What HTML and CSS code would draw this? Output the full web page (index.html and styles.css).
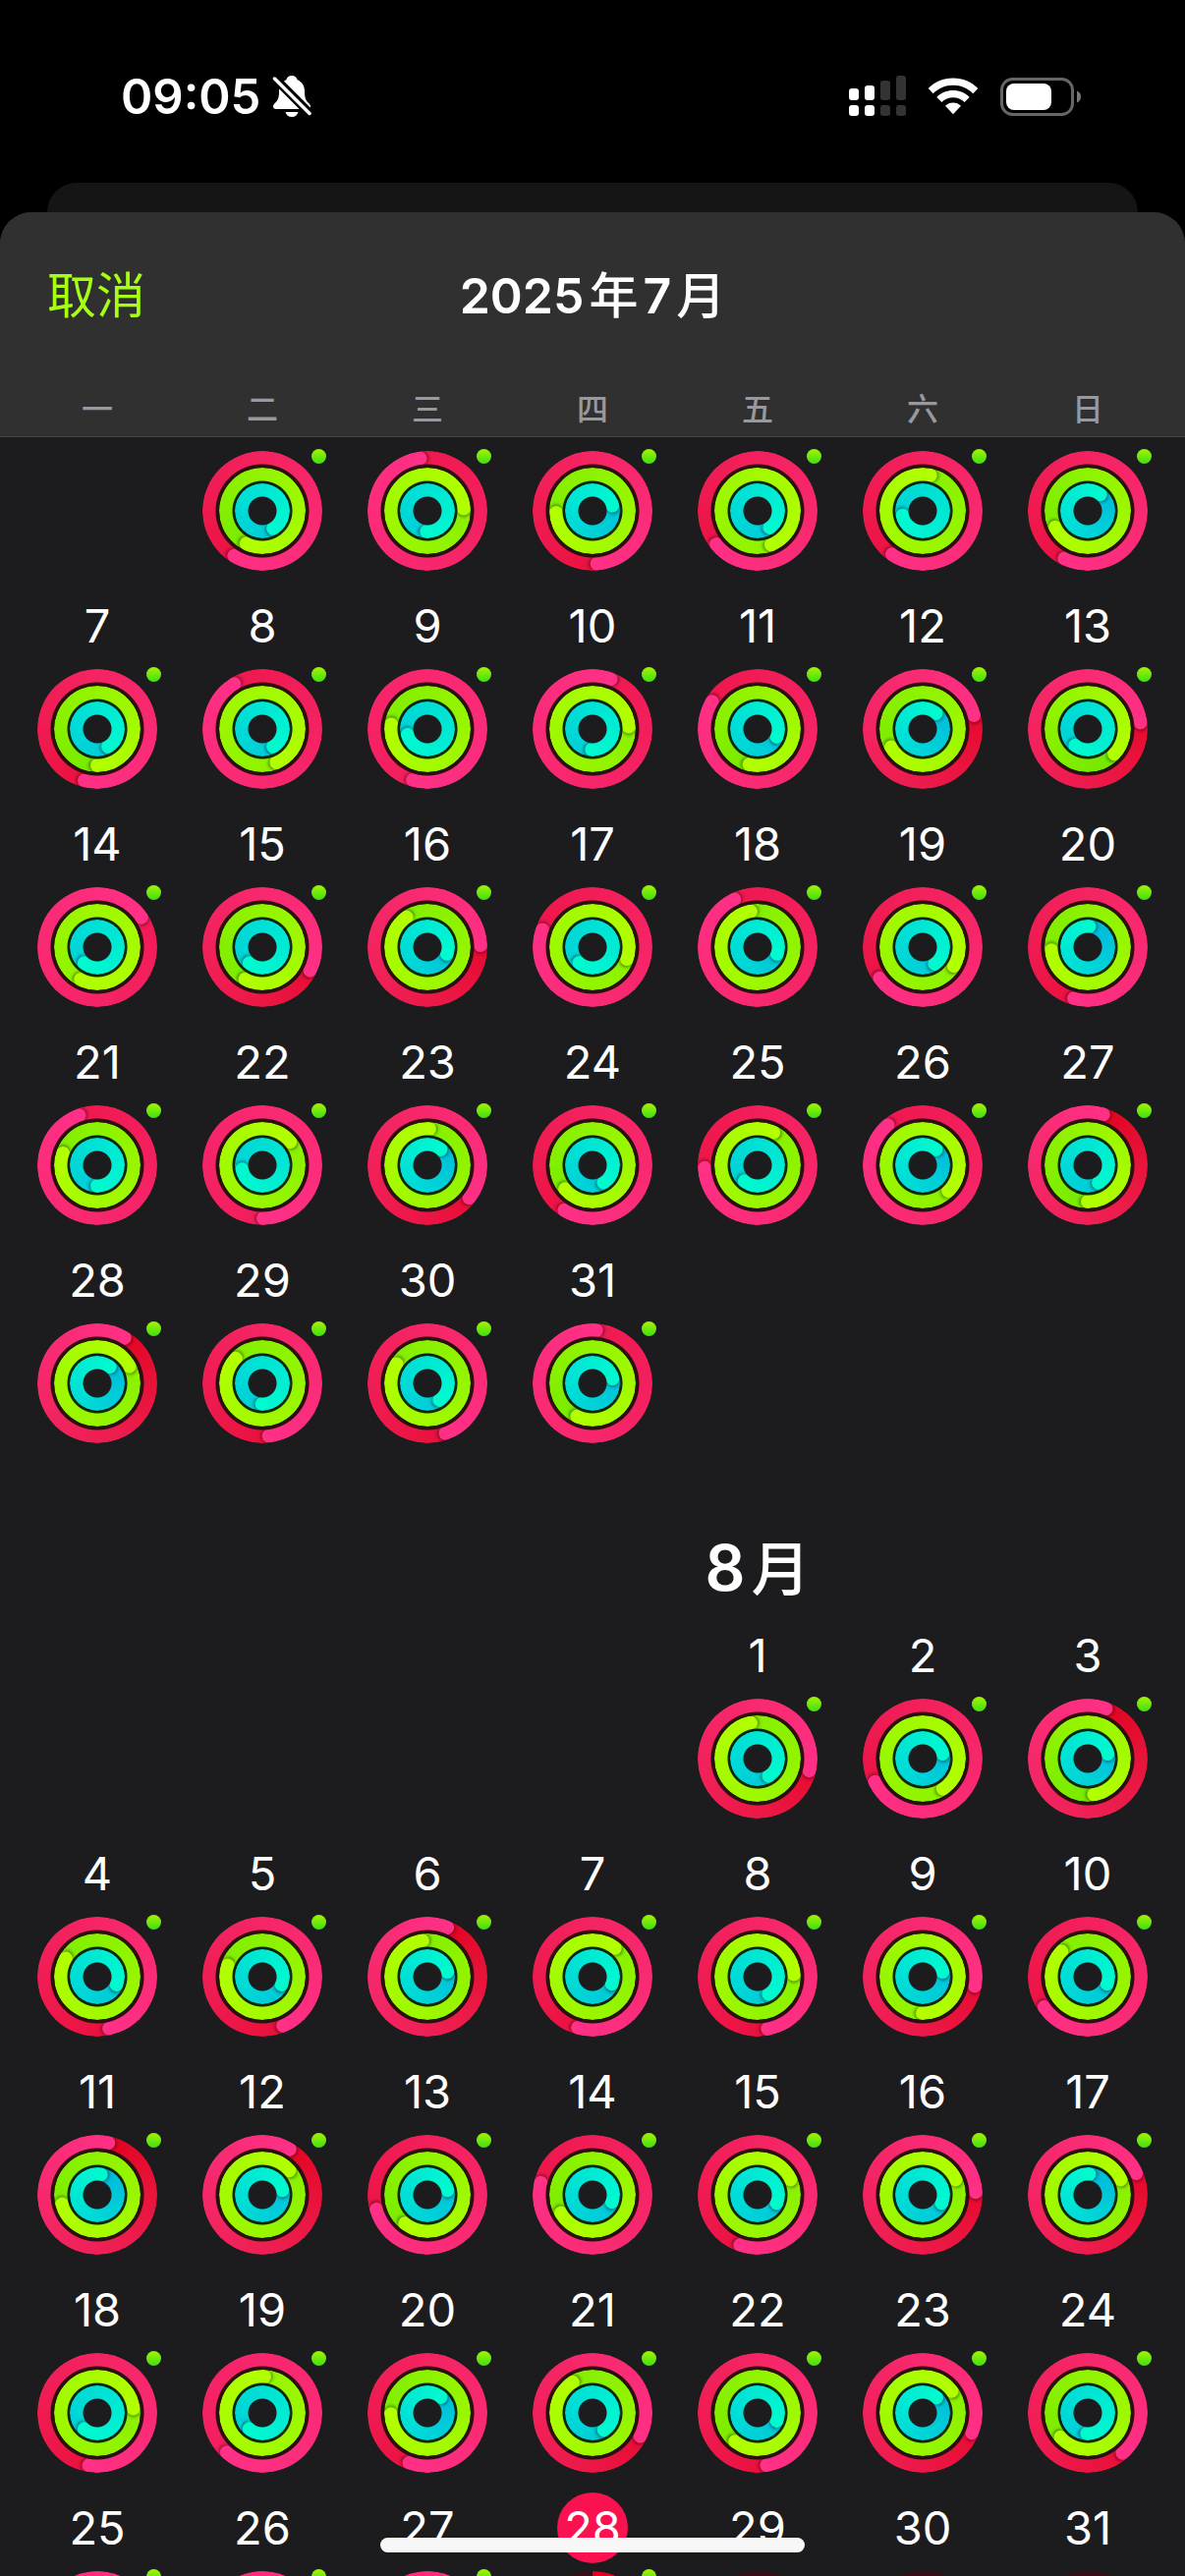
FILE: index.html
```html
<!DOCTYPE html>
<html lang="zh-CN">
<head>
  <meta charset="UTF-8">
  <meta name="viewport" content="width=device-width, initial-scale=1">
  <title>2025年7月</title>
  <link rel="stylesheet" href="styles.css">
</head>
<body>

  <div class="status-bar">
    <div class="status-left">
      <span class="time">09:05</span>
      <svg class="bell" width="40" height="44" viewBox="0 0 40 44" fill="#fff">
        <path d="M20 1c3.200 0 5 1.700 5.600 4.200 4.800 2 7.400 6.300 7.400 11.500 0 7 1.200 9.600 4.200 12.300 1.200 1.100 1.800 2.300 1.800 3.500 0 1.500-1.100 2.500-2.800 2.500H3.800C2.100 35 1 34 1 32.500c0-1.200.6-2.400 1.800-3.500C5.800 26.300 7 23.700 7 16.700c0-5.200 2.600-9.500 7.400-11.500C15 2.700 16.800 1 20 1z"/>
        <path d="M13.500 38h13c-.7 3.100-3.200 5-6.500 5s-5.800-1.900-6.500-5z"/>
        <path d="M2 3l37 37" stroke="#000" stroke-width="9"/>
        <path d="M2.500 4l35.500 35.500" stroke="#fff" stroke-width="3.500" stroke-linecap="round"/>
      </svg>
    </div>
    <div class="status-right">
      <svg width="58" height="42" viewBox="0 0 58 42">
        <g fill="#fff">
          <rect x="0" y="13" width="10" height="12" rx="3"/>
          <rect x="16" y="10" width="10" height="15" rx="3"/>
          <rect x="0" y="30" width="10" height="11" rx="3"/>
          <rect x="16" y="30" width="10" height="11" rx="3"/>
        </g>
        <g fill="#333">
          <rect x="32" y="5" width="10" height="20" rx="3"/>
          <rect x="48" y="0" width="10" height="25" rx="3"/>
          <rect x="32" y="30" width="10" height="11" rx="3"/>
          <rect x="48" y="30" width="10" height="11" rx="3"/>
        </g>
      </svg>
      <svg width="52" height="38" viewBox="0 0 52 38" fill="#fff">
        <path d="M26 0.500C36 0.500 45 4.500 51.300 11L46.300 16.200C41 11 34 7.800 26 7.800S11 11 5.700 16.200L0.700 11C7 4.500 16 0.500 26 0.500z"/>
        <path d="M26 13C32.500 13 38.400 15.600 42.700 19.900L37.600 25.100C34.600 22.100 30.500 20.300 26 20.300S17.400 22.100 14.400 25.100L9.300 19.900C13.600 15.600 19.500 13 26 13z"/>
        <path d="M26 25.500C29 25.500 31.900 26.700 34 28.800L26 37.300L18 28.800C20.100 26.700 23 25.500 26 25.500z"/>
      </svg>
      <svg width="83" height="39" viewBox="0 0 83 39">
        <rect x="1.500" y="1.500" width="72" height="36" rx="11" fill="none" stroke="#666" stroke-width="3"/>
        <rect x="6" y="6" width="46" height="27" rx="8" fill="#fff"/>
        <path d="M78 13.500c2.700 1.100 4 3.200 4 6s-1.300 4.900-4 6z" fill="#777"/>
      </svg>
    </div>
  </div>

  <div class="card-behind"></div>

  <main class="sheet">
    <header class="sheet-header">
      <div class="nav">
        <button type="button" class="cancel">取消</button>
        <h1>2025<span class="unit">年</span>7<span class="unit">月</span></h1>
      </div>
      <div class="weekdays">
        <span>一</span>
        <span>二</span>
        <span>三</span>
        <span>四</span>
        <span>五</span>
        <span>六</span>
        <span>日</span>
      </div>
    </header>

    <div class="calendar">
      <section class="month" id="july"></section>
      <h2 class="month-title"><span class="month-name">8<span class="unit">月</span></span></h2>
      <section class="month" id="august"></section>
    </div>
  </main>

  <div class="home-indicator"></div>

  <script src="script.js"></script>
</body>
</html>
```
FILE: styles.css
```css
* {
  box-sizing: border-box;
}

body {
  margin: 0;
  height: 100vh;
  display: flex;
  flex-direction: column;
  overflow: hidden;
  background: #000;
  color: #fff;
  font-family: Inter, "Noto Sans CJK SC", sans-serif;
}

button {
  padding: 0;
  border: none;
  background: none;
  color: inherit;
  font: inherit;
  cursor: pointer;
}

/* status bar */

.status-bar {
  display: flex;
  justify-content: space-between;
  padding: 62px 105px 52px 123px;
}

.status-left,
.status-right {
  display: flex;
  align-items: center;
  height: 72px;
}

.status-left {
  gap: 12px;
}

.status-right {
  gap: 22px;
}

.time {
  font-size: 49px;
  font-weight: 600;
}

/* sheet */

.card-behind {
  height: 30px;
  margin: 0 48px;
  border-radius: 30px 30px 0 0;
  background: #151516;
}

.sheet {
  flex: 1;
  min-height: 0;
  display: flex;
  flex-direction: column;
  overflow: hidden;
  border-radius: 32px 32px 0 0;
  background: #1c1c1e;
}

.sheet-header {
  padding-top: 39px;
  background: #303030;
  border-bottom: 1px solid #444;
}

.nav {
  display: grid;
  grid-template-columns: 1fr auto 1fr;
  align-items: center;
  height: 84px;
  padding: 0 48px;
}

.cancel {
  justify-self: start;
  color: #a6ff12;
  font-size: 50px;
}

h1 {
  display: flex;
  align-items: baseline;
  gap: 5px;
  margin: 0;
  font-size: 50px;
  font-weight: 600;
}

.unit {
  font-weight: 500;
}

.weekdays,
.month {
  display: grid;
  grid-template-columns: repeat(7, 1fr);
  padding: 0 15px;
}

.weekdays {
  margin-top: 54px;
  padding-bottom: 3px;
  color: #98989e;
  font-size: 32px;
  font-weight: 500;
  line-height: 48px;
  text-align: center;
}

/* calendar */

.calendar {
  flex: 1;
  min-height: 0;
  overflow: hidden;
  padding-top: 14px;
}

.month {
  row-gap: 20px;
}

.month-title {
  display: grid;
  grid-template-columns: repeat(7, 1fr);
  margin: 0;
  padding: 91px 15px 16px;
  font-size: 64px;
  font-weight: 600;
  line-height: 72px;
}

.month-name {
  grid-column: 5;
  display: flex;
  justify-content: center;
  align-items: baseline;
  gap: 6px;
}

.month-name .unit {
  font-size: 60px;
}

.day {
  display: flex;
  flex-direction: column;
  align-items: center;
  gap: 8px;
}

.number {
  width: 72px;
  height: 72px;
  border-radius: 50%;
  font-size: 47px;
  line-height: 72px;
}

.today .number {
  background: #fa114f;
}

/* activity rings */

.rings {
  position: relative;
  display: grid;
  place-items: center;
  width: 122px;
  height: 122px;
  border-radius: 50%;
  background: radial-gradient(circle, transparent 14px, #04260f 15px, #0a260c 30px, #2a160c 32px, #2a0f10 48px, transparent 49px);
}

.ring {
  grid-area: 1 / 1;
  border-radius: 50%;
  -webkit-mask: radial-gradient(closest-side, transparent calc(100% - 14px), #000 calc(100% - 13px));
  mask: radial-gradient(closest-side, transparent calc(100% - 14px), #000 calc(100% - 13px));
}

.move {
  --start: #e0001a;
  --end: #ff3086;
  --track: #3a0d16;
  width: 122px;
  height: 122px;
}

.exercise {
  --start: #58e000;
  --end: #b2ff00;
  --track: #16300a;
  width: 88px;
  height: 88px;
}

.stand {
  --start: #00b6dc;
  --end: #00fad0;
  --track: #06303a;
  width: 56px;
  height: 56px;
}

.empty {
  background: var(--track);
}

.arm {
  width: 100%;
  height: 100%;
}

.cap {
  width: 14px;
  height: 14px;
  margin: 0 auto;
  border-radius: 50%;
  background: var(--end);
  box-shadow: 2px 0 3px rgba(0, 0, 0, 0.35);
}

.dot {
  position: absolute;
  top: -2px;
  right: -4px;
  width: 15px;
  height: 15px;
  border-radius: 50%;
  background: linear-gradient(#a4f400, #3ee012);
}

.home-indicator {
  position: fixed;
  left: 50%;
  bottom: 24px;
  width: 432px;
  height: 15px;
  margin-left: -216px;
  border-radius: 8px;
  background: #f7f7f7;
}
```
FILE: script.js
```javascript
// move, exercise and stand progress of each day, in degrees (360 = goal reached)
const july = [
  [572, 566, 508], [712, 806, 542], [535, 627, 435], [591, 878, 504], [575, 732, 617], [566, 603, 397],
  [554, 540, 508], [688, 877, 508], [916, 637, 614], [740, 806, 542], [661, 553, 472], [435, 600, 400], [443, 493, 577],
  [776, 927, 579], [476, 568, 579], [448, 685, 469], [649, 829, 580], [694, 709, 469], [594, 841, 504], [555, 625, 364],
  [700, 649, 540], [899, 770, 618], [488, 723, 400], [572, 589, 507], [627, 746, 579], [679, 855, 400], [377, 540, 508],
  [391, 782, 397], [533, 673, 541], [520, 662, 504], [724, 565, 437]
];

const august = [
  [463, 709, 507], [604, 866, 436], [380, 530, 436],
  [527, 660, 472], [517, 648, 472], [382, 712, 436], [556, 758, 470], [529, 806, 507], [460, 900, 436], [595, 674, 470],
  [372, 615, 370], [391, 768, 437], [614, 578, 437], [643, 600, 470], [559, 785, 473], [447, 785, 473], [426, 785, 364],
  [549, 803, 579], [942, 1083, 579], [560, 628, 400], [476, 687, 506], [530, 578, 472], [472, 773, 402], [499, 588, 542],
  [780, 700, 500], [790, 700, 500], [800, 700, 500], [200, 120, 150], null, null, null
];

const ringNames = ['move', 'exercise', 'stand'];

function ring(name, degrees) {
  if (!degrees) {
    return `<span class="ring ${name} empty"></span>`;
  }

  let background;
  if (degrees < 360) {
    background = `conic-gradient(var(--start), var(--end) ${degrees}deg, var(--track) ${degrees}deg)`;
  } else {
    // only the last lap is visible, so the tail starts part way along the gradient
    const mix = Math.round((degrees - 360) / degrees * 100);
    background = `conic-gradient(from ${degrees % 360}deg, color-mix(in srgb, var(--end) ${mix}%, var(--start)), var(--end))`;
  }

  return `<span class="ring ${name}" style="background: ${background}">
    <div class="arm" style="transform: rotate(${degrees % 360}deg)"><div class="cap"></div></div>
  </span>`;
}

function renderMonth(id, days, options) {
  const month = document.getElementById(id);

  days.forEach((progress, index) => {
    const number = index + 1;
    const day = document.createElement('button');
    day.type = 'button';
    day.className = number === options.today ? 'day today' : 'day';
    day.setAttribute('aria-label', options.name + number + '日');
    if (number === 1) {
      day.style.gridColumnStart = options.firstColumn;
    }

    const label = number > options.unlabelled ? `<span class="number">${number}</span>` : '';
    const rings = ringNames.map((name, i) => ring(name, progress && progress[i])).join('');
    const dot = progress ? '<span class="dot"></span>' : '';
    day.innerHTML = `${label}<span class="rings">${rings}${dot}</span>`;
    month.appendChild(day);
  });
}

renderMonth('july', july, { name: '7月', firstColumn: 2, unlabelled: 6 });
renderMonth('august', august, { name: '8月', firstColumn: 5, unlabelled: 0, today: 28 });
```
